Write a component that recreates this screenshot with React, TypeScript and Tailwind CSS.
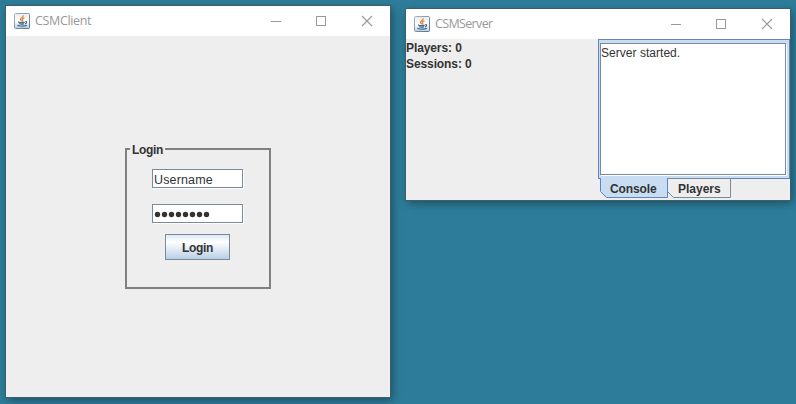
import type { ReactNode } from "react";

function JavaIcon() {
  return (
    <svg width="16" height="16" viewBox="0 0 16 16" className="shrink-0">
      <defs>
        <linearGradient id="plate" x1="0" y1="0" x2="0" y2="1">
          <stop offset="0" stopColor="#e9edf0" />
          <stop offset="0.55" stopColor="#ffffff" />
          <stop offset="1" stopColor="#b9cad7" />
        </linearGradient>
        <linearGradient id="rim" x1="0" y1="0" x2="1" y2="1">
          <stop offset="0" stopColor="#a9b4bd" />
          <stop offset="1" stopColor="#54748f" />
        </linearGradient>
      </defs>
      <rect x="0.5" y="0.5" width="15" height="15" rx="1" fill="url(#plate)" stroke="url(#rim)" />
      <path d="M9.3 2.4C9.8 4 6.3 4.7 6.5 6.3c.1.8.8 1.2 1 2M10.4 4.8C8 5.5 8.1 6.3 8.700 7c.4.6 0 1-.4 1.400" fill="none" stroke="#ea8330" strokeWidth="1.3" />
      <path d="M5 8.900c-1.800.7 4 1 5.600.2M5.300 10.600c.8.7 3.500.7 4.700.1M11.300 8.600c2.200-.3 1.500 1.800-.3 2.200M4.200 12c-2 .9 6 1.700 8.600.2" fill="none" stroke="#3d6c94" strokeWidth="1.2" />
    </svg>
  );
}

function TitleBar({ title, spacing }: { title: string; spacing: string }) {
  return (
    <header className="flex h-[30px] items-center bg-white pl-2">
      <JavaIcon />
      <span className={`ml-[5px] font-['Open_Sans','Noto_Sans',sans-serif] text-[12.5px] leading-4 text-[#999] ${spacing}`}>{title}</span>
      <svg width="106" height="12" viewBox="0 0 106 12" className="mr-[13px] ml-auto" fill="none" stroke="#999" shapeRendering="crispEdges">
        <path d="M0 6.5h10M45.5 1.5h9v9h-9z" />
        <path d="M91 1l10 10M101 1l-10 10" strokeWidth="1.1" shapeRendering="auto" />
      </svg>
    </header>
  );
}

type WindowProps = { title: string; titleSpacing: string; className: string; children: ReactNode };

function Window({ title, titleSpacing, className, children }: WindowProps) {
  return (
    <section className={`absolute flex w-96 flex-col bg-[#eee] shadow-[0_0_0_1px_#3d5f6c,2px_3px_9px_rgba(0,0,0,0.4)] ${className}`}>
      <TitleBar title={title} spacing={titleSpacing} />
      {children}
    </section>
  );
}

function Field({ children }: { children: ReactNode }) {
  return (
    <div className="flex h-[19px] w-[91px] items-center border border-[#7a8a99] bg-white pl-px shadow-[1px_1px_0_#fff]">
      {children}
    </div>
  );
}

export default function App() {
  return (
    <main className="relative h-[404px] w-[796px] overflow-hidden bg-[#2d7d9a] font-['Liberation_Sans',Arial,sans-serif] text-[12px] text-[#333]">
      <Window title="CSMClient" titleSpacing="tracking-[-0.35px]" className="top-[6px] left-[6px] h-[391px]">
        <div className="pt-[112px] pl-[119px]">
          <div className="flex h-[141px] w-[146px] flex-col border-2 border-[#808080] pl-[25px]">
            <span className="-mt-2 -ml-[22px] h-4 w-[35px] bg-[#eee] pl-[2px] leading-4 font-bold tracking-[-0.35px]">Login</span>
            <div className="mt-[11px]">
              <Field><span className="pt-[3px] text-[12.5px] leading-4 tracking-[0.15px]">Username</span></Field>
            </div>
            <div className="mt-4">
              <Field>
                <svg width="57" height="8" className="mt-px" fill="#333">
                  {Array.from({ length: 8 }, (_, i) => <circle key={i} cx={3.5 + i * 7} cy="4.5" r="2.7" />)}
                </svg>
              </Field>
            </div>
            <button className="mt-[11px] ml-[13px] h-[26px] w-[65px] border border-[#7a8a99] bg-linear-to-b from-[#dde8f3] via-white via-30% to-[#b8cfe5] pt-px font-bold tracking-[-0.35px]">Login</button>
          </div>
        </div>
      </Window>
      <Window title="CSMServer" titleSpacing="tracking-[-0.65px]" className="top-[9px] left-[406px] h-[191px]">
        <div className="grid flex-1 grid-cols-2">
          <div className="pt-px leading-4 font-bold tracking-[-0.1px]">
            <p>Players: 0</p>
            <p>Sessions: 0</p>
          </div>
          <div>
            <div className="h-[140px] border border-[#6382bf] bg-[#c8ddf2] pt-[3px] pl-px">
              <div className="h-[132px] w-[186px] border border-[#7a8a99] bg-white pt-px leading-4 tracking-[0.03px] shadow-[1px_1px_0_#fff]">Server started.</div>
            </div>
            <div className="relative -mt-px ml-[2px] flex h-5 w-[131px]">
              <svg width="131" height="20" className="absolute inset-0">
                <path d="M67.5.5h63v19h-57l-6-6z" fill="#eee" stroke="#7a8a99" />
                <path d="M.5 0v13.500l6 6h61V0" fill="#c8ddf2" stroke="#6382bf" />
              </svg>
              <span className="relative w-[67px] pl-[10px] leading-[23px] font-bold tracking-[-0.1px]">Console</span>
              <span className="relative pl-[11px] leading-[23px] font-bold">Players</span>
            </div>
          </div>
        </div>
      </Window>
    </main>
  );
}
